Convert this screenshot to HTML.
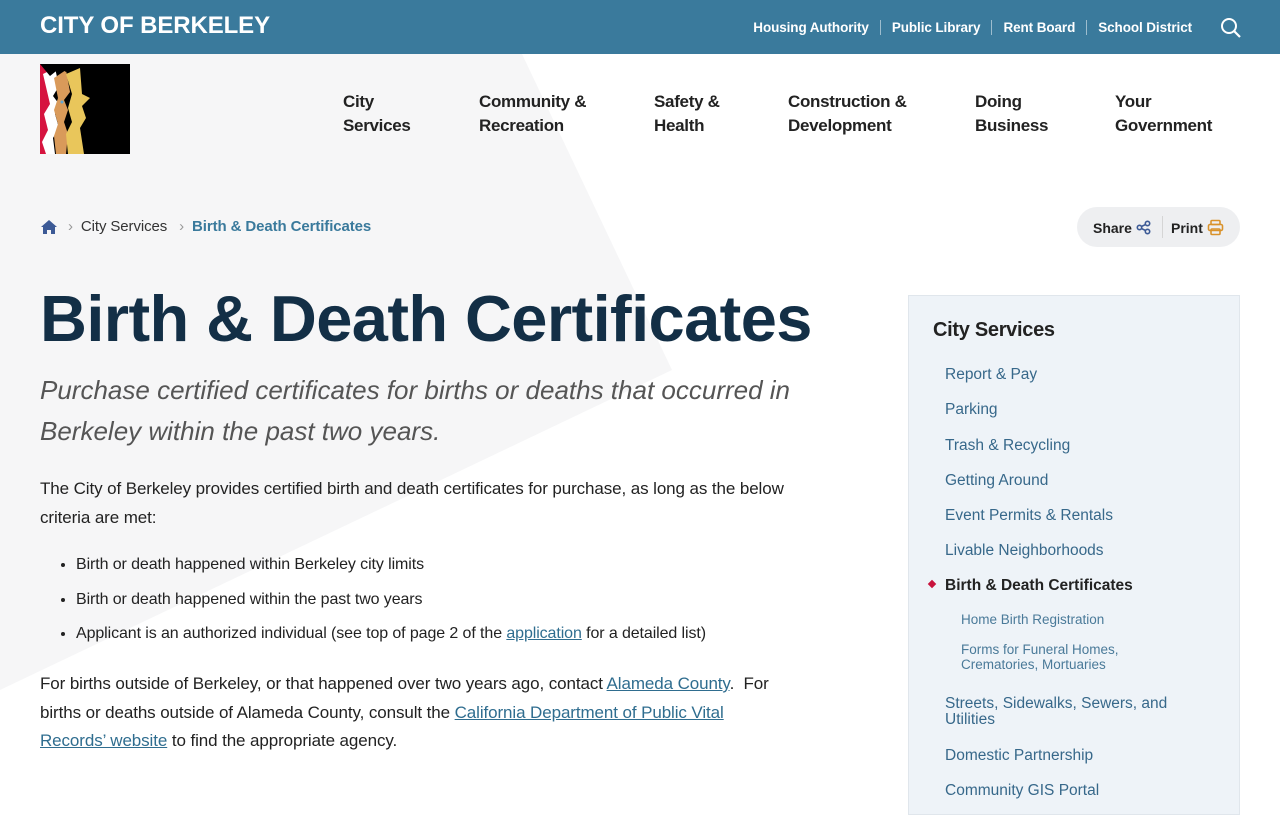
<!DOCTYPE html>
<html><head><meta charset="utf-8"><style>
*{margin:0;padding:0;box-sizing:border-box}
body{width:1280px;height:800px;overflow:hidden;background:#fff;font-family:"Liberation Sans",Arial,sans-serif;color:#1f1f1f;position:relative}
.bg{position:absolute;left:0;top:54px;width:1280px;height:746px}
.top{position:absolute;left:0;top:0;width:1280px;height:54px;background:#3a7a9c}
.brand{position:absolute;left:40px;top:12px;color:#fff;font-weight:bold;font-size:24px;letter-spacing:-0.1px}
.toplinks{position:absolute;right:77px;top:20px;color:#fff;font-weight:bold;font-size:13.5px;display:flex;letter-spacing:-0.1px}
.toplinks span{padding:0 11px;border-left:1px solid rgba(255,255,255,.5);line-height:15px}
.toplinks span:first-child{border:none}
.nav{position:absolute;top:90px;font-weight:bold;font-size:17px;line-height:24px;color:#222;letter-spacing:-0.3px}
.bc{position:absolute;left:40px;top:218px;font-size:15px;color:#333;display:flex;align-items:center;letter-spacing:-0.1px}
.pill{position:absolute;left:1077px;top:207px;width:163px;height:40px;border-radius:20px;background:#eeeff1;font-weight:bold;font-size:14px;color:#222}
h1{position:absolute;left:40px;top:281px;font-size:65px;font-weight:bold;color:#132f46;letter-spacing:-0.6px;white-space:nowrap}
.sub{position:absolute;left:40px;top:370px;width:820px;font-size:26px;font-style:italic;color:#555;line-height:41px;letter-spacing:0px}
.p{position:absolute;left:40px;width:820px;font-size:17px;line-height:28.5px;color:#222;letter-spacing:-0.1px}
ul{position:absolute;left:76px;top:553px;font-size:16px;color:#222;list-style:disc;letter-spacing:-0.1px}
ul li{height:34.5px;line-height:24px}
a{color:#2f6d8f;text-decoration:underline}
.side{position:absolute;left:908px;top:295px;width:332px;height:520px;background:#eef3f8;border:1px solid #e0e6ec}
.side h3{position:absolute;left:24px;top:23px;font-size:20px;color:#222;letter-spacing:-0.3px}
.side .i{position:absolute;left:36px;font-size:15.5px;color:#37688a;letter-spacing:0px}
.side .s{position:absolute;left:52px;font-size:13.5px;color:#4a7a99;line-height:15px;letter-spacing:0px}
</style></head><body>
<svg class="bg" viewBox="0 0 1280 746"><polygon points="0,0 522,0 672,316 0,636" fill="#f6f6f7"/></svg>
<div class="top"><div class="brand">CITY OF BERKELEY</div>
<div class="toplinks"><span>Housing Authority</span><span>Public Library</span><span>Rent Board</span><span>School District</span></div>
<svg style="position:absolute;left:1220px;top:17px" width="22" height="22" viewBox="0 0 22 22"><circle cx="9" cy="9" r="7" fill="none" stroke="#fff" stroke-width="2"/><path d="M14 14l6 6" stroke="#fff" stroke-width="2.2"/></svg></div>
<svg style="position:absolute;left:40px;top:64px" width="90" height="90" viewBox="0 0 90 90"><rect width="90" height="90" fill="#000"/><path d="M0 0h10v90H0z" fill="#d6143f"/><path d="M3 10l12-6 4 18 -6 10 6 8-4 10 4 14-6 10 2 16H6l-4-12 6-12-4-16 6-10z" fill="#fff"/><path d="M14 14l12-8 4 22-6 8 4 10-4 12 4 12-2 20H16l-2-18 4-12-4-14 4-12z" fill="#d99a5a"/><path d="M26 10l14-6 2 26 8 4-8 8 4 12-6 10 4 26H28l-2-20 6-12-4-14 4-14z" fill="#e9c65b"/><path d="M0 0h40l-14 8-6-4-10 8z" fill="#000"/><circle cx="22" cy="38" r="1.5" fill="#5fa6d5"/></svg>
<div class="nav" style="left:343px">City<br>Services</div>
<div class="nav" style="left:479px">Community &amp;<br>Recreation</div>
<div class="nav" style="left:654px">Safety &amp;<br>Health</div>
<div class="nav" style="left:788px">Construction &amp;<br>Development</div>
<div class="nav" style="left:975px">Doing<br>Business</div>
<div class="nav" style="left:1115px">Your<br>Government</div>
<div class="bc"><svg width="18" height="16" viewBox="0 0 18 16"><path d="M9 1L1 8h2v7h4v-4h4v4h4V8h2z" fill="#3c5a96"/></svg>
<span style="margin:0 8px 0 10px;color:#999">›</span>City Services<span style="margin:0 8px 0 12px;color:#999">›</span><span style="color:#3a7a9c;font-weight:bold">Birth &amp; Death Certificates</span></div>
<div class="pill"><span style="position:absolute;left:16px;top:13px">Share</span>
<svg style="position:absolute;left:59px;top:13px" width="15" height="15" viewBox="0 0 15 15" fill="none" stroke="#3c5a96" stroke-width="1.6"><circle cx="3.5" cy="7.5" r="2.2"/><circle cx="11.5" cy="3.5" r="2.2"/><circle cx="11.5" cy="11.5" r="2.2"/><path d="M5.5 6.5l4-2M5.5 8.5l4 2"/></svg>
<span style="position:absolute;left:85px;top:9px;width:1px;height:22px;background:#d5d5d5"></span>
<span style="position:absolute;left:94px;top:13px">Print</span>
<svg style="position:absolute;left:130px;top:12px" width="17" height="17" viewBox="0 0 17 17" fill="none" stroke="#d9922a" stroke-width="1.6"><rect x="4" y="1.5" width="9" height="4" rx="1"/><rect x="1.5" y="5.5" width="14" height="6" rx="1.5"/><rect x="4" y="10" width="9" height="5.5" rx="1"/></svg></div>
<h1>Birth &amp; Death Certificates</h1>
<div class="sub">Purchase certified certificates for births or deaths that occurred in<br>Berkeley within the past two years.</div>
<div class="p" style="top:475px">The City of Berkeley provides certified birth and death certificates for purchase, as long as the below<br>criteria are met:</div>
<ul><li>Birth or death happened within Berkeley city limits</li><li>Birth or death happened within the past two years</li><li>Applicant is an authorized individual (see top of page 2 of the <a>application</a> for a detailed list)</li></ul>
<div class="p" style="top:670px">For births outside of Berkeley, or that happened over two years ago, contact <a>Alameda County</a>.&nbsp; For<br>births or deaths outside of Alameda County, consult the <a>California Department of Public Vital<br>Records’ website</a> to find the appropriate agency.</div>
<div class="side"><h3>City Services</h3>
<div class="i" style="top:70px">Report &amp; Pay</div>
<div class="i" style="top:105px">Parking</div>
<div class="i" style="top:141px">Trash &amp; Recycling</div>
<div class="i" style="top:176px">Getting Around</div>
<div class="i" style="top:211px">Event Permits &amp; Rentals</div>
<div class="i" style="top:246px">Livable Neighborhoods</div>
<div style="position:absolute;left:20px;top:285px;width:6px;height:6px;background:#c8133d;transform:rotate(45deg)"></div>
<div class="i" style="top:281px;color:#222;font-weight:bold">Birth &amp; Death Certificates</div>
<div class="s" style="top:316px">Home Birth Registration</div>
<div class="s" style="top:346px">Forms for Funeral Homes,<br>Crematories, Mortuaries</div>
<div class="i" style="top:400px;line-height:16px">Streets, Sidewalks, Sewers, and<br>Utilities</div>
<div class="i" style="top:451px">Domestic Partnership</div>
<div class="i" style="top:486px">Community GIS Portal</div>
</div>
</body></html>
